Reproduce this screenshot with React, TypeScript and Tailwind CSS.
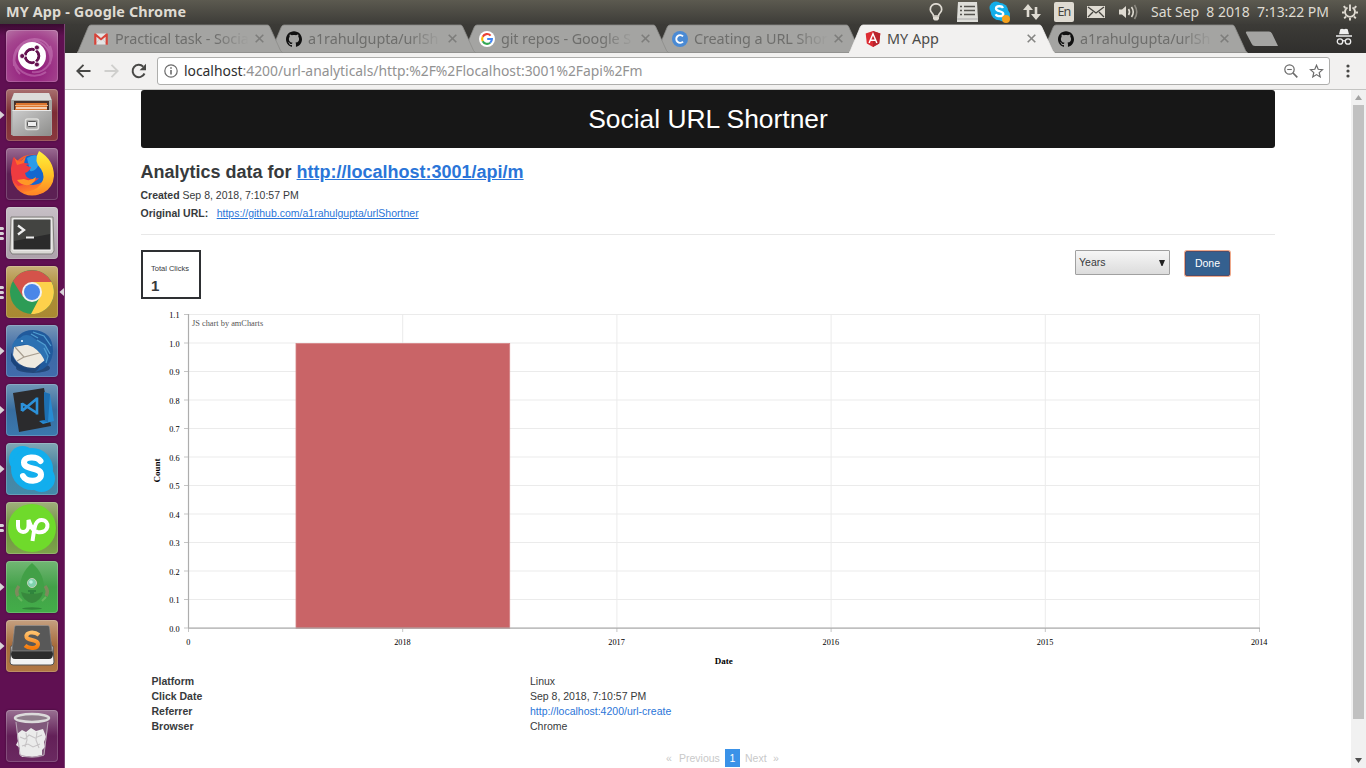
import React from "react";
import { SiGithub } from "react-icons/si";

const UI = "font-['Noto_Sans','Open_Sans',sans-serif]";

function GmailIcon() {
  return (
    <svg width="14" height="12" viewBox="0 0 14 12">
      <path d="M1 .5h12v11H1z" fill="#e4e4e4" />
      <path d="M1 11.5 5.5 6M13 11.5 8.500 6" stroke="#c4c4c4" strokeWidth=".6" />
      <path d="M.2.7 1.500.3 7 5 12.500.3 13.800.7V11.700H11.600V3.700L7 7.400 2.400 3.700V11.700H.2z" fill="#d7443a" />
    </svg>
  );
}
function GoogleIcon() {
  return (
    <svg width="16" height="16" viewBox="0 0 16 16">
      <circle cx="8" cy="8" r="8" fill="#fff" />
      <g fill="none" strokeWidth="2.100">
        <path d="M11.600 4.600A4.900 4.900 0 0 0 3.700 5.700" stroke="#ea4335" />
        <path d="M3.700 5.700a4.900 4.900 0 0 0 0 4.600" stroke="#fbbc05" />
        <path d="M3.700 10.300A4.900 4.900 0 0 0 11.200 11.700" stroke="#34a853" />
        <path d="M11.200 11.700A4.900 4.900 0 0 0 12.900 8H8.200" stroke="#4285f4" />
      </g>
    </svg>
  );
}
function CIcon() {
  return (
    <svg width="16" height="16" viewBox="0 0 16 16">
      <circle cx="8" cy="8" r="8" fill="#4a8ad4" />
      <path d="M11 5.300A3.900 3.900 0 1 0 11 10.700" fill="none" stroke="#fff" strokeWidth="1.900" />
    </svg>
  );
}
function AngularIcon() {
  return (
    <svg width="16" height="16" viewBox="0 0 16 16">
      <path d="M8 0 15.300 2.600 14.200 12.500 8 16 1.800 12.500.7 2.600z" fill="#dd2c33" />
      <path d="M8 0 15.300 2.600 14.200 12.500 8 16z" fill="#b9242d" />
      <path d="M4.100 12 8 2.800 11.900 12M5.800 9.200h4.400" fill="none" stroke="#fff" strokeWidth="1.500" />
    </svg>
  );
}

const tabs = [
  { title: "Practical task - Social", icon: <GmailIcon /> },
  { title: "a1rahulgupta/urlSh", icon: <SiGithub size={16} color="#111" /> },
  { title: "git repos - Google S", icon: <GoogleIcon /> },
  { title: "Creating a URL Shor", icon: <CIcon /> },
  { title: "MY App", icon: <AngularIcon />, active: true },
  { title: "a1rahulgupta/urlSh", icon: <SiGithub size={16} color="#111" /> },
];
const layers = ["z-[6]", "z-[5]", "z-[4]", "z-[3]", "z-10", "z-[1]"];

function TabStrip() {
  return (
    <div className="flex h-[29px] bg-[linear-gradient(#3c3b37,#302f2d)] pl-[12px]">
      {tabs.map((t, i) => (
        <div key={i} className={`relative flex h-[29px] w-[193px] shrink-0 items-center ${layers[i]}`}>
          <svg className="absolute left-0 top-0" width="207" height="29" viewBox="0 0 207 29">
            <path
              d="M0 29 1.500 26.500 11.300 3Q12.300 1 14 1H190.500Q192 1 192.800 3L203.500 26.500 205.500 29z"
              fill={t.active ? "#f2f1f0" : "#a4a4a2"}
              stroke={t.active ? "#f2f1f0" : "#8b8b89"}
              strokeWidth=".8"
            />
            {!t.active && <path d="M1 28.500H205" stroke="#929290" />}
          </svg>
          <div className="relative flex w-full items-center pl-[16px]">
            <span className="flex w-[16px] shrink-0 justify-center">{t.icon}</span>
            <span
              className={`ml-[6px] w-[140px] shrink-0 overflow-hidden whitespace-nowrap text-[14.4px] leading-[20px] ${
                t.active
                  ? "text-[#4b4b49]"
                  : "tracking-[-0.1px] text-[#6e6e6c] [mask-image:linear-gradient(to_right,#000_100px,transparent_134px)]"
              }`}
            >
              {t.title}
            </span>
            <svg className="shrink-0" width="9" height="9" viewBox="0 0 9 9">
              <path d="M.7.7 8.300 8.300M8.300.7.7 8.300" stroke={t.active ? "#858583" : "#7d7d7b"} strokeWidth="1.600" />
            </svg>
          </div>
        </div>
      ))}
      <svg className="ml-[10px] mt-[7px] shrink-0" width="34" height="16" viewBox="0 0 34 16">
        <path d="M2 .5H24Q26 .5 27 2.500L33 15H10Q7.500 15 6.500 12.500L1 2Q.5.5 2 .5z" fill="#a4a4a2" />
      </svg>
      <svg className="ml-[56px] mt-[4px] shrink-0" width="18" height="18" viewBox="0 0 18 18">
        <path d="M5.300 1.300 7 .8 9 1.300 11 .8l1.700.5 1.300 5H4zM1 7.300h16v1.500H1z" fill="#eee" />
        <g fill="none" stroke="#eee" strokeWidth="1.300">
          <circle cx="5" cy="13.500" r="2.700" />
          <circle cx="13" cy="13.500" r="2.700" />
          <path d="M7.700 13q1.300-.8 2.600 0" />
        </g>
      </svg>
    </div>
  );
}

function TopBar() {
  return (
    <div className={`flex h-6 items-center bg-[linear-gradient(#5c5a50,#3d3c38)] text-[#dfdbd2] ${UI}`}>
      <span className="ml-[6px] w-[300px] text-[14.400px] font-bold leading-6 tracking-[0.14px]">MY App - Google Chrome</span>
      <svg className="ml-[622px] shrink-0" width="16" height="18" viewBox="0 0 16 18">
        <path d="M5.500 13C5.500 10.500 2.300 9.500 2.300 6.500a5.700 5.700 0 0 1 11.400 0C13.700 9.500 10.500 10.500 10.500 13z" fill="none" stroke="#dfdbd2" strokeWidth="1.700" />
        <path d="M5 13.500h6V16L9.500 17.500h-3L5 16z" fill="#dfdbd2" />
      </svg>
      <svg className="ml-[13px] shrink-0" width="21" height="20" viewBox="0 0 21 20">
        <path d="M1 0h19l1 17v3H0v-3z" fill="#deded9" />
        <path d="M3 4.500h2m2 0h11M3 8.500h2m2 0h11M3 12.500h2m2 0h11" stroke="#55544f" strokeWidth="1.600" />
        <path d="M0 17h21" stroke="#aaa" />
      </svg>
      <svg className="ml-[11px] shrink-0" width="22" height="22" viewBox="0 0 22 22">
        <circle cx="7" cy="7" r="6.500" fill="#13aeea" />
        <circle cx="14.500" cy="14" r="6.500" fill="#13aeea" />
        <circle cx="10.500" cy="10.500" r="8.800" fill="#13aeea" />
        <path d="M14 7C13 4.500 7 4.700 7 7.500c0 3.500 7.300 2 7.300 5.400 0 3-6.300 3-7.600.3" fill="none" stroke="#fff" strokeWidth="2.300" />
        <circle cx="17" cy="18" r="4" fill="#f6a21c" />
      </svg>
      <svg className="ml-[12px] shrink-0" width="18" height="16" viewBox="0 0 18 16">
        <path d="M5 0 10 6H6.300v7H3.700V6H0zM13 16 8 10h3.700V3h2.600v7H18z" fill="#dfdbd2" />
      </svg>
      <span className="ml-[13px] flex h-[20px] w-[20px] shrink-0 items-center justify-center rounded-[2px] bg-[#dfdbd2] text-[12.500px] leading-none tracking-[-0.8px] text-[#45443f]">En</span>
      <svg className="ml-[13px] shrink-0" width="18" height="12" viewBox="0 0 18 12">
        <path d="M0 0h18v12H0z" fill="#dfdbd2" />
        <path d="m1 1 8 6 8-6M1 11l5-5M17 11l-5-5" fill="none" stroke="#45443f" strokeWidth="1.300" />
      </svg>
      <svg className="ml-[14px] shrink-0" width="20" height="16" viewBox="0 0 20 16">
        <path d="M0 5.500h3L7 2v12l-4-3.500H0z" fill="#dfdbd2" />
        <path d="M9.500 5q2 3 0 6M12.500 3q3.500 5 0 10" fill="none" stroke="#dfdbd2" strokeWidth="1.600" />
        <path d="M15.500 1q4.500 7 0 14" fill="none" stroke="#8c8981" strokeWidth="1.600" />
      </svg>
      <span className="ml-[12px] w-[182px] shrink-0 whitespace-pre text-[14px] leading-6 tracking-[-0.04px]">Sat Sep  8 2018  7:13:22 PM</span>
      <svg className="ml-[8px] shrink-0" width="18" height="18" viewBox="0 0 18 18" fill="none" stroke="#dfdbd2">
        <path d="M6.500 4.500A5 5 0 1 0 11.500 4.500" strokeWidth="1.900" />
        <path d="M9 1.500v6.500" strokeWidth="1.900" />
        <path d="M4.500 5 2.700 3.200M3.500 9.500H1M5 13.500l-1.800 1.800M9 15v2.500M13 13.500l1.800 1.800M14.500 9.500H17M13.500 5l1.800-1.800" strokeWidth="1.900" />
      </svg>
    </div>
  );
}

function Toolbar() {
  return (
    <div className="flex h-[37px] items-center border-b border-[#c4c4c2] bg-[#f2f1f0]">
      <svg className="ml-[11px]" width="15" height="14" viewBox="0 0 15 14" fill="none" stroke="#484846" strokeWidth="1.900">
        <path d="M14.500 7H1.500M7.500.8 1.300 7l6.200 6.200" />
      </svg>
      <svg className="ml-[13px]" width="15" height="14" viewBox="0 0 15 14" fill="none" stroke="#cfcfcd" strokeWidth="1.900">
        <path d="M.5 7h13M7.500.8 13.700 7l-6.200 6.200" />
      </svg>
      <svg className="ml-[12px]" width="16" height="16" viewBox="0 0 16 16">
        <path d="M13.500 10.500A6.200 6.200 0 1 1 12.200 3.600" fill="none" stroke="#484846" strokeWidth="2" />
        <path d="M15 .8v6.400H8.600z" fill="#484846" />
      </svg>
      <div className={`ml-[10px] flex h-[28px] w-[1173px] items-center rounded-[3px] border border-[#aeaeac] bg-white ${UI}`}>
        <svg className="ml-[6px]" width="14" height="14" viewBox="0 0 14 14">
          <circle cx="7" cy="7" r="6.200" fill="none" stroke="#6b6b6b" strokeWidth="1.200" />
          <path d="M7 6v4.500M7 3.200v1.600" stroke="#6b6b6b" strokeWidth="1.600" />
        </svg>
        <span className="ml-[6px] w-[1098px] whitespace-nowrap text-[13.900px] leading-[20px] tracking-[-0.02px] text-[#929292]">
          <span className="text-[#2e2e2e]">localhost</span>:4200/url-analyticals/http:%2F%2Flocalhost:3001%2Fapi%2Fm
        </span>
        <svg className="ml-[2px] shrink-0" width="14" height="14" viewBox="0 0 14 14" fill="none" stroke="#6b6b6b">
          <circle cx="5.500" cy="5.500" r="4.700" strokeWidth="1.200" />
          <path d="M3.200 5.500h4.600" strokeWidth="1.100" />
          <path d="m9 9 4.300 4.300" strokeWidth="1.700" />
        </svg>
        <svg className="ml-[11px] shrink-0" width="15" height="14" viewBox="0 0 15 14" fill="none" stroke="#6b6b6b" strokeWidth="1.200">
          <path d="m7.500 1.300 1.700 4 4.300.4-3.300 2.900 1 4.300-3.700-2.300-3.700 2.300 1-4.300L1.500 5.700l4.300-.4z" />
        </svg>
      </div>
      <svg className="ml-[16px]" width="4" height="14" viewBox="0 0 4 14" fill="#484846">
        <circle cx="2" cy="2" r="1.600" />
        <circle cx="2" cy="7" r="1.600" />
        <circle cx="2" cy="12" r="1.600" />
      </svg>
    </div>
  );
}

const launcher = [
  {
    tile: "bg-[radial-gradient(circle_at_50%_70%,#8d1277,#a5468f_70%,#b774a6)]",
    marks: 0,
    art: (
      <>
        <path d="M26 10C40 12 46 22 44 34M10 20C22 4 42 6 45 24M8 36C6 20 14 10 30 12M14 44C4 34 8 18 20 14M44 16C50 30 40 44 26 42M40 42C28 50 12 44 8 30" fill="none" stroke="#e3a9d6" strokeWidth="2" opacity=".35" />
        <circle cx="26" cy="26" r="14" fill="#fff" />
        <circle cx="26" cy="26" r="6.800" fill="none" stroke="#64104f" strokeWidth="3" />
        <path d="M26 26H14M26 26l6-10.400M26 26l6 10.400" stroke="#fff" strokeWidth="1.200" />
        <circle cx="26" cy="26" r="5.300" fill="#fff" />
        <g fill="#64104f" stroke="#fff" strokeWidth=".8">
          <circle cx="16.200" cy="26" r="2.500" />
          <circle cx="30.900" cy="17.500" r="2.500" />
          <circle cx="30.900" cy="34.500" r="2.500" />
        </g>
      </>
    ),
  },
  {
    tile: "bg-[linear-gradient(#a9706f,#7d2d35_45%,#8a393e)]",
    marks: 1,
    art: (
      <>
        <path d="M8 4h35l3 7v35H5V11z" fill="#a5a5a2" />
        <path d="M8 4h35l2.500 7H5.500z" fill="#dcdcd9" />
        <path d="M8 12h35v9H8z" fill="#46302a" />
        <path d="M10 14h31v7H9z" fill="#dd762f" />
        <path d="M9 16.500h33" stroke="#f0b27e" strokeWidth="1" />
        <path d="M10 19h31" stroke="#fbeee2" strokeWidth="1.600" />
        <path d="M6.500 21h38.500v26h-38.500z" fill="url(#steel)" />
        <path d="M6.500 21.500h38.500" stroke="#e8e8e8" />
        <rect x="19.500" y="30" width="13" height="10.500" rx="2" fill="#a9a9a7" stroke="#dededc" strokeWidth="1.500" />
        <rect x="21.500" y="32.500" width="9" height="5" rx="1" fill="#eee" stroke="#555" />
      </>
    ),
  },
  {
    tile: "bg-[linear-gradient(#9b6b92,#5c2054_50%,#5c2054)]",
    marks: 0,
    art: (
      <>
        <circle cx="26" cy="27" r="20.500" fill="url(#fire)" />
        <circle cx="27" cy="22" r="15" fill="#1467cf" />
        <path d="M21 10q8-5 12-1l-1 9q-3 6-8 5z" fill="#2a9ce8" />
        <path d="M7 10l1-1q3 5 7 4l4 2 5 1-4 1q2 2 5 2-1 4-6 6 1 6 8 6l6-1q-4 5-11 6L12 38Q4 30 5 20z" fill="#ee3b40" />
        <path d="M8 9q3 5 7 4l5-5-2 7-7 2z" fill="#ff6a2a" />
        <path d="M33 3q15 9 15 25-1 12-11 17-10 4-20-1 12 0 18-8 5-7 0-15-8-8-2-18z" fill="url(#flame)" />
        <path d="M18 31q6 3 12-2-1 6-7 8-8 1-12-5z" fill="#ff9726" />
      </>
    ),
  },
  {
    tile: "bg-[linear-gradient(#c7c0c6,#aca1aa)]",
    marks: 3,
    art: (
      <>
        <path d="M5 10h42l1 34-2 3H6l-2-3z" fill="#dad9d5" stroke="#7f7d7a" />
        <path d="M7 12h38v31H7z" fill="#2b2b2b" stroke="#fafafa" />
        <path d="M8 13h36v14L8 34z" fill="#434441" />
        <path d="m12 18.500 6 4.500-6 4.500" fill="none" stroke="#eee" strokeWidth="2.300" />
        <path d="M20 30.500h8" stroke="#eee" strokeWidth="2" />
      </>
    ),
  },
  {
    tile: "bg-[linear-gradient(#c8b078,#ad8e36_45%,#a98932)]",
    marks: 3,
    focused: true,
    art: (
      <>
        <circle cx="26" cy="26" r="22" fill="#2d9c56" />
        <path d="M7 15A22 22 0 0 1 45.500 16H26L17 31z" fill="#d4534a" />
        <path d="M26 16h19.500A22 22 0 0 1 25 48l9.500-18z" fill="#fdd14b" />
        <circle cx="26" cy="26" r="10" fill="#f2f2f2" />
        <circle cx="26" cy="26" r="8" fill="#4a86e8" />
      </>
    ),
  },
  {
    tile: "bg-[linear-gradient(#7897b8,#3c69a5_50%,#416cac)]",
    marks: 1,
    art: (
      <>
        <ellipse cx="27" cy="43" rx="17" ry="5" fill="#24487a" />
        <path d="M7 24Q10 5 27 5q20 1 20 21-1 17-18 21 8-6 6-18-3-12-14-9z" fill="#215a9c" />
        <path d="m8 22 22-4 9 17-10 8Q12 43 7 30z" fill="#eee9df" />
        <path d="m9 22 9 10 19-5M18 32l-7 4" fill="none" stroke="#a99f91" strokeWidth="1.200" />
        <path d="M6 24q0-10 8-11 4-5 11-2 5 4 14 9 5 6 0 17-3-9-12-15-10-5-14-1-4-1-7 3z" fill="#2c71b2" />
        <path d="m27 7 11 4 7 10M31 15l8 5 5 9M38 23l4 8-2 7M25 9l7 4" fill="none" stroke="#4f9dd0" strokeWidth="1.300" />
        <circle cx="16" cy="16" r="1.100" fill="#e6f4ff" />
        <path d="M5 27q5 15 20 18-13 3-20-9z" fill="#1a437b" />
      </>
    ),
  },
  {
    tile: "bg-[linear-gradient(#7197b7,#376d9f_50%,#3b79ae)]",
    marks: 1,
    art: (
      <>
        <path d="m7 9 31-5 7 38-32 6z" fill="#2b2b2d" />
        <path d="m38 8 6 2 4 27-11 3-4-3 6-1z" fill="#278bd2" />
        <path d="m38 8 6 2-2 28-7-1 4-1z" fill="#1d6fb2" />
        <path d="M31 13.500v17M31 14.500 16 27M31 29 16 19.500M16 19v8" fill="none" stroke="#2c91d9" strokeWidth="2.600" />
      </>
    ),
  },
  {
    tile: "bg-[linear-gradient(#82a8b5,#4984a0_45%,#438aaa)]",
    marks: 1,
    art: (
      <>
        <circle cx="16.500" cy="16.500" r="13.500" fill="#12aeed" />
        <circle cx="35.500" cy="35.500" r="13.500" fill="#12aeed" />
        <circle cx="26" cy="26" r="21" fill="#12aeed" />
        <path d="M34.500 18C31 13 18 13 18 19.500c0 8 17 4 17 12 0 8-15 8-18 1.500" fill="none" stroke="#fff" strokeWidth="6" strokeLinecap="round" />
      </>
    ),
  },
  {
    tile: "bg-[linear-gradient(#a0b07c,#6f9240_50%,#7da44b)]",
    marks: 2,
    art: (
      <>
        <circle cx="26" cy="26" r="24" fill="#6fda2b" />
        <path d="M12 18v6c0 8 10 8 10.500 0v-6c2 6 4 11 9 12 12 2 13-12 4-12-7 0-7 9-9 21" fill="none" stroke="#fff" strokeWidth="4" />
      </>
    ),
  },
  {
    tile: "bg-[linear-gradient(#72b674,#42a148_50%,#43ae49)]",
    marks: 1,
    art: (
      <>
        <ellipse cx="26" cy="47.500" rx="10" ry="1.200" fill="#318439" />
        <path d="M13 25q-4 5-1 10M39 25q4 5 1 10" fill="none" stroke="#7d8b5d" strokeWidth="3.500" />
        <path d="M26 2Q13 13 14 30q2 10 12 12 10-2 12-12Q39 13 26 2z" fill="#42a047" />
        <path d="M15 31q11 4 22 0-2 9-11 11-9-2-11-11z" fill="#38893d" />
        <circle cx="26" cy="22" r="4.500" fill="#7fd3ae" stroke="#c3cfb8" />
        <circle cx="25" cy="21" r="1.800" fill="#bdf2e2" />
        <path d="M22 30h8M24 32h4" stroke="#1f6a35" />
        <path d="m12 36 4 4M40 36l-4 4" stroke="#66b85e" strokeWidth="2" />
      </>
    ),
  },
  {
    tile: "bg-[linear-gradient(#c5a080,#a66b3b_50%,#b17743)]",
    marks: 1,
    art: (
      <>
        <path d="m5 26-1 16q0 3 3 3h38q3 0 3-3l-1-16z" fill="#f2f2f2" stroke="#555" />
        <path d="M9 7h34l4 27q0 5-4 5H9q-4 0-4-5z" fill="#2c2c2c" />
        <path d="M10 5.500h32q1.500 0 1.500 2L46 31H6L8.500 7.500q0-2 1.500-2z" fill="#585858" stroke="#999" strokeWidth=".6" />
        <path d="M33 15C28 11 19.500 12 20.500 17c1 4 11.500 2 11.500 7 0 5-9 5-13 1.500" fill="none" stroke="url(#orange)" strokeWidth="4" />
      </>
    ),
  },
];

function LauncherTile({ item }: { item: { tile: string; marks: number; focused?: boolean; art: React.ReactNode } }) {
  return (
    <div className="flex h-[52px] w-full items-center">
      <span className="flex w-[6px] shrink-0 flex-col gap-[2px]">
        {item.marks === 1 && (
          <svg width="5" height="8" viewBox="0 0 5 8">
            <path d="M0 0 4.500 4 0 8z" fill="#d8d3d7" />
          </svg>
        )}
        {item.marks > 1 &&
          Array.from({ length: item.marks }, (_, i) => <i key={i} className="h-[3px] w-[4px] rounded-r bg-[#d8d3d7]" />)}
      </span>
      <div className={`h-[52px] w-[52px] shrink-0 overflow-hidden rounded-[4px] shadow-[inset_0_0_0_1px_rgba(255,255,255,0.18),0_0_2px_rgba(20,0,20,0.5)] ${item.tile}`}>
        <svg width="52" height="52" viewBox="0 0 52 52">{item.art}</svg>
      </div>
      {item.focused && (
        <svg className="ml-px shrink-0" width="5" height="8" viewBox="0 0 5 8">
          <path d="M5 0 .5 4 5 8z" fill="#d8d3d7" />
        </svg>
      )}
    </div>
  );
}

function Launcher() {
  return (
    <div className="flex w-[65px] shrink-0 flex-col gap-[7px] border-r border-[#7e4575] bg-[linear-gradient(#3a0a31,#601052_12px,#601052)] pt-[6px]">
      <svg className="absolute" width="0" height="0">
        <defs>
          <linearGradient id="steel" x2="1" y2="1"><stop stopColor="#ccc" /><stop offset="1" stopColor="#8d8d8b" /></linearGradient>
          <linearGradient id="fire" x2="0.3" y2="1"><stop stopColor="#ff6b24" /><stop offset=".5" stopColor="#f0343f" /><stop offset="1" stopColor="#ff8a24" /></linearGradient>
          <linearGradient id="flame" x2="0" y2="1"><stop stopColor="#fff03b" /><stop offset=".5" stopColor="#ffc526" /><stop offset="1" stopColor="#ff8526" /></linearGradient>
          <linearGradient id="orange" x2="0" y2="1"><stop stopColor="#ffc16b" /><stop offset="1" stopColor="#f67b0b" /></linearGradient>
        </defs>
      </svg>
      {launcher.map((item, i) => (
        <LauncherTile key={i} item={item} />
      ))}
      <div className="mt-[31px]">
        <LauncherTile
          item={{
            tile: "bg-[linear-gradient(#997092,#632058_50%,#6b2a61)]",
            marks: 0,
            art: (
              <>
                <path d="M9 9h34l-5 37q-12 4-24 0z" fill="#80597b" />
                <path d="m11 24 5-4 4 2 5-4 5 3 7-2 2 5 1 3-2 5 1 5-3 3v5l-5 1-5 1-4-1-6 1-3-4 1-5-4-3 2-4z" fill="#ebebeb" />
                <path d="m14 27 5 2 4-4 6 3 7-3M16 36l6-2 5 3 7-3M20 23l1 7-2 7M31 22l-1 8 3 8" fill="none" stroke="#c6c3c5" strokeWidth="1.100" />
                <ellipse cx="26" cy="8" rx="17" ry="4" fill="#8f7d8b" stroke="#dcdbdb" strokeWidth="2.500" />
                <path d="m10 12 4 33q12 4 24 0l4-33" fill="none" stroke="#b9a5b6" />
              </>
            ),
          }}
        />
      </div>
    </div>
  );
}

const yTicks = ["1.1", "1.0", "0.9", "0.8", "0.7", "0.6", "0.5", "0.4", "0.3", "0.2", "0.1", "0.0"];
const xTicks = ["0", "2018", "2017", "2016", "2015", "2014"];

function Chart() {
  return (
    <svg className="block" width="1134" height="369" viewBox="141 305 1134 369" fontFamily="Liberation Serif, serif" fontSize="8.25">
      {yTicks.map((t, i) => {
        const y = 314.5 + i * 28.500;
        return (
          <g key={t}>
            <path d={`M188 ${y}H1260`} stroke="#ebebeb" />
            <path d={`M184 ${y}H188`} stroke="#c5c5c5" />
            <text x="179.500" y={Math.round(y + 3.500)} textAnchor="end">{t}</text>
          </g>
        );
      })}
      {xTicks.map((t, i) => {
        const x = 188.5 + i * 214.200;
        return (
          <g key={t}>
            <path d={`M${x} 314V628`} stroke="#ebebeb" />
            <path d={`M${x} 628V632`} stroke="#c5c5c5" />
            <text x={x - 0.300} y="645" textAnchor="middle">{t}</text>
          </g>
        );
      })}
      <rect x="296" y="343.500" width="213.700" height="285" fill="#c96467" stroke="#d58386" strokeWidth=".8" />
      <path d="M188.500 314V628M188 628.200H1260" fill="none" stroke="#adadad" strokeWidth="1.200" />
      <text x="192" y="326" fill="#555" fontSize="8.350">JS chart by amCharts</text>
      <text x="723.700" y="664" textAnchor="middle" fontWeight="bold" fontSize="9">Date</text>
      <text transform="translate(160 470.500) rotate(-90)" textAnchor="middle" fontWeight="bold" fontSize="9">Count</text>
    </svg>
  );
}

const details = [
  ["Platform", "Linux"],
  ["Click Date", "Sep 8, 2018, 7:10:57 PM"],
  ["Referrer", "http://localhost:4200/url-create"],
  ["Browser", "Chrome"],
];

function Page() {
  return (
    <div className="flex min-h-0 flex-1 bg-white font-['Liberation_Sans',Arial,sans-serif] text-[10.5px] leading-[15px] text-[#373a3c]">
      <main className="flex min-w-0 flex-1 justify-center overflow-hidden">
        <div className="flex w-[1134px] flex-col">
          <header className="flex h-[58px] shrink-0 items-center justify-center rounded-[3px] bg-[#171717] text-[26.400px] text-white">Social URL Shortner</header>
          <h2 className="-ml-[0.5px] mt-[12px] text-[18px] font-bold leading-[24px]">
            Analytics data for <a className="text-[#2a75d8] underline">http://localhost:3001/api/m</a>
          </h2>
          <p className="-ml-[0.5px] mt-[4px] leading-[15px]"><b>Created</b> Sep 8, 2018, 7:10:57 PM</p>
          <p className="-ml-[0.5px] mt-[3px] leading-[15px]"><b>Original URL:</b><a className="ml-[8.5px] text-[#2a75d8] underline">https://github.com/a1rahulgupta/urlShortner</a></p>
          <hr className="mt-[13px] border-[#e8e8e8]" />
          <div className="mt-[15px] flex h-[55px] items-start">
            <div className="flex h-[49px] w-[60px] flex-col border-2 border-[#2e3033] pl-[8px] pt-[11px]">
              <span className="text-[7.500px] leading-[12px]">Total Clicks</span>
              <b className="mt-[2px] text-[15px] leading-[18px]">1</b>
            </div>
            <div className="ml-[874px] flex h-[25px] w-[95px] items-center justify-between rounded-[1px] border border-[#a0a0a0] bg-[linear-gradient(#f6f6f6,#dcdcdc)] px-[3px]">
              Years
              <svg className="mr-px" width="6" height="6" viewBox="0 0 6 6"><path d="M0 0h6L3.500 6h-1z" fill="#222" /></svg>
            </div>
            <button className="ml-[15px] mt-px h-[25px] w-[45px] rounded-[2px] border border-[#4d4d6b] bg-[#34608f] text-white shadow-[0_0_0_1px_#efa98b]">Done</button>
          </div>
          <Chart />
          <div className="grid grid-cols-[378px_1fr] pl-[11px]">
            {details.map(([k, v]) => (
              <React.Fragment key={k}>
                <b className="-ml-[0.5px]">{k}</b>
                <span className={k === "Referrer" ? "text-[#2a75d8]" : ""}>{v}</span>
              </React.Fragment>
            ))}
          </div>
          <nav className="ml-[525px] mt-[15px] flex h-[18px] items-center text-[#c9c9c9]">
            <span className="w-[13px]">«</span>
            <span className="w-[46px]">Previous</span>
            <span className="flex h-[18px] w-[15px] items-center justify-center bg-[#3a92e8] text-white">1</span>
            <span className="ml-[5px] w-[28px]">Next</span>
            <span>»</span>
          </nav>
        </div>
      </main>
      <div className="flex w-[15px] flex-col items-center bg-[#f1f1f1] py-[5px]">
        <svg width="7" height="5" viewBox="0 0 7 5"><path d="M0 5h7L3.500 0z" fill="#a3a3a3" /></svg>
        <div className="mt-[5px] h-[614px] w-[11px] bg-[#c1c1c1]" />
        <svg className="mt-auto" width="7" height="5" viewBox="0 0 7 5"><path d="M0 0h7L3.500 5z" fill="#505050" /></svg>
      </div>
    </div>
  );
}

export default function App() {
  return (
    <div className="flex h-[768px] w-[1366px] flex-col overflow-hidden">
      <TopBar />
      <div className="flex min-h-0 flex-1">
        <Launcher />
        <div className={`flex min-w-0 flex-1 flex-col ${UI}`}>
          <TabStrip />
          <Toolbar />
          <Page />
        </div>
      </div>
    </div>
  );
}
